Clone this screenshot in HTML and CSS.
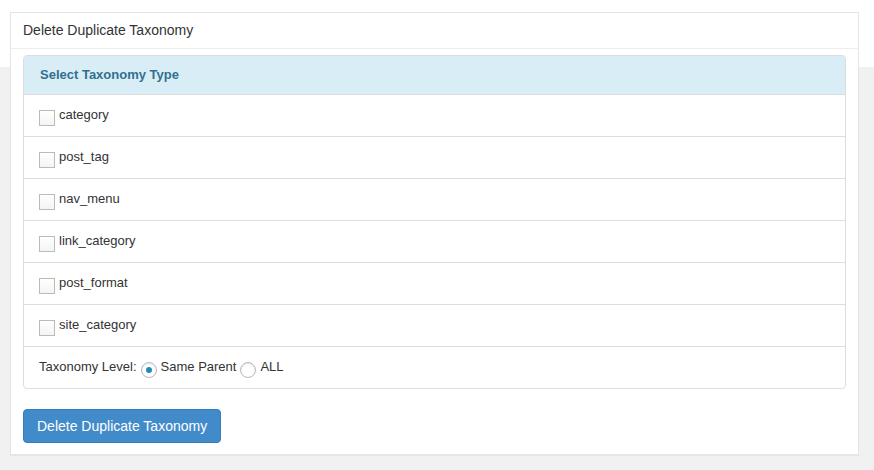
FILE: index.html
```html
<!DOCTYPE html>
<html lang="en">
<head>
    <meta charset="UTF-8">
    <meta name="viewport" content="width=device-width, initial-scale=1.0">
    <title>Delete Duplicate Taxonomy</title>
    <link rel="stylesheet" href="styles.css">
</head>
<body>
    <div class="card">
        <div class="card-title">Delete Duplicate Taxonomy</div>
        <div class="card-body">
            <div class="panel">
                <div class="panel-heading">Select Taxonomy Type</div>
                <label class="row"><span class="check"></span>category</label>
                <label class="row"><span class="check"></span>post_tag</label>
                <label class="row"><span class="check"></span>nav_menu</label>
                <label class="row"><span class="check"></span>link_category</label>
                <label class="row"><span class="check"></span>post_format</label>
                <label class="row"><span class="check"></span>site_category</label>
                <div class="row"><span>Taxonomy Level:</span><span class="radio checked"></span><span>Same Parent</span><span class="radio"></span><span>ALL</span></div>
            </div>
            <button class="button">Delete Duplicate Taxonomy</button>
        </div>
    </div>
</body>
</html>
```

FILE: styles.css
```css
body {
    margin: 0;
    font-family: "Liberation Sans", Arial, sans-serif;
    font-size: 13px;
    color: #333;
    background: linear-gradient(#fff 0, #fff 67px, #f1f1f1 67px);
    height: 470px;
}
.card {
    margin: 12px 0 0 10px;
    width: 847px;
    background: #fff;
    border: 1px solid #e5e5e5;
    box-shadow: 0 1px 1px rgba(0,0,0,0.04);
}
.card-title {
    height: 35px;
    line-height: 35px;
    padding-left: 12px;
    font-size: 14px;
    color: #333;
    border-bottom: 1px solid #eee;
}
.card-body {
    padding: 6px 12px 11px 12px;
}
.panel {
    border: 1px solid #ddd;
    border-radius: 4px;
    overflow: hidden;
}
.panel-heading {
    height: 38px;
    line-height: 38px;
    padding-left: 16px;
    background: #d9edf7;
    color: #31708f;
    font-weight: bold;
}
.row {
    display: flex;
    align-items: center;
    height: 39px;
    padding: 0 0 2px 15px;
    border-top: 1px solid #ddd;
}
.check {
    width: 14px;
    height: 14px;
    border: 1px solid #bbb;
    background: linear-gradient(#fff, #f4f4f4);
    margin: 7px 4px 0 0;
}
.radio {
    position: relative;
    width: 14px;
    height: 14px;
    border: 1px solid #b4b9be;
    border-radius: 50%;
    background: #fff;
    box-shadow: inset 0 1px 2px rgba(0,0,0,0.1);
    margin: 6px 4px 0 4px;
}
.radio.checked::after {
    content: "";
    position: absolute;
    left: 4px;
    top: 4px;
    width: 6px;
    height: 6px;
    border-radius: 50%;
    background: #1e8cbe;
}
.button {
    margin-top: 20px;
    height: 34px;
    padding: 0 13px;
    font-family: "Liberation Sans", Arial, sans-serif;
    font-size: 14px;
    color: #fff;
    background: #428bca;
    border: 1px solid #357ebd;
    border-radius: 4px;
    cursor: pointer;
}
```
